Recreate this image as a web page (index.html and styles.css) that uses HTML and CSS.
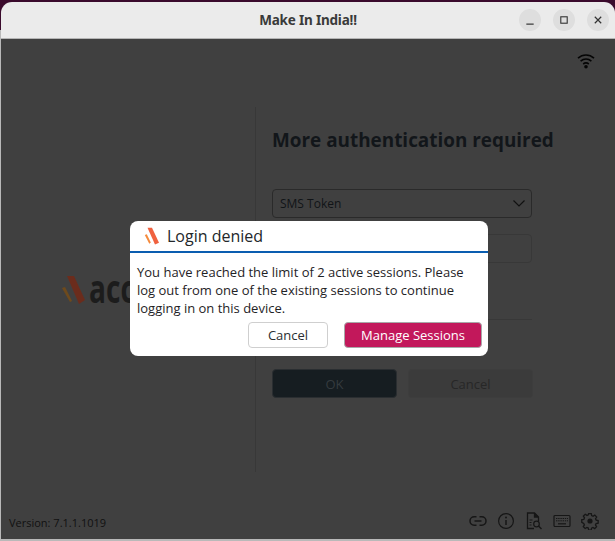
FILE: index.html
```html
<!DOCTYPE html>
<html lang="en">
<head>
<meta charset="utf-8">
<title>Make In India!!</title>
<link rel="stylesheet" href="styles.css">
</head>
<body>
<div class="window">
  <header class="titlebar">
    <div class="title">Make In India!!</div>
    <div class="controls">
      <span class="ctl"><svg width="24" height="24" viewBox="0 0 24 24"><path d="M8 16.500h8" stroke="#333" stroke-width="1.300" fill="none"/></svg></span>
      <span class="ctl"><svg width="24" height="24" viewBox="0 0 24 24"><rect x="8.500" y="8.500" width="7" height="7" stroke="#333" stroke-width="1.200" fill="none"/></svg></span>
      <span class="ctl"><svg width="24" height="24" viewBox="0 0 24 24"><path d="M8.500 8.500l7 7M15.500 8.500l-7 7" stroke="#333" stroke-width="1.300" fill="none"/></svg></span>
    </div>
  </header>
  <div class="content">
    <div class="status">
      <svg width="18" height="16" viewBox="0 0 18 16"><path d="M1 5.200C5.600 1 12.400 1 17 5.200M3.600 8.200c3.200-2.800 7.600-2.800 10.800 0M6.200 11c1.700-1.300 3.900-1.300 5.600 0" stroke="#050505" stroke-width="1.600" fill="none"/><circle cx="9" cy="13.700" r="1.800" fill="#050505"/></svg>
    </div>
    <div class="main">
      <aside class="brand">
        <svg class="brand-mark" width="26" height="30" viewBox="0 0 26 30"><path d="M6 1h7l11 24-6 4z" fill="#6b2c1c"/><path d="M1 13l3-1 7 14-2 1z" fill="#6e4a1c"/></svg>
        <span class="brand-name">accops</span>
      </aside>
      <section class="form">
        <h1 class="heading">More authentication required</h1>
        <div class="field select"><span>SMS Token</span>
          <svg width="14" height="9" viewBox="0 0 14 9"><path d="M1.500 1.500L7 7l5.500-5.500" stroke="#111" stroke-width="1.200" fill="none"/></svg>
        </div>
        <div class="field input"></div>
        <div class="rule"></div>
        <div class="actions">
          <div class="btn btn-ok">OK</div>
          <div class="btn btn-cancel">Cancel</div>
        </div>
      </section>
    </div>
    <footer class="footer">
      <span class="version">Version: 7.1.1.1019</span>
      <div class="tools">
        <svg width="18" height="18" viewBox="0 0 18 18"><path d="M7.500 4.800H5.200a4.200 4.200 0 0 0 0 8.400h2.300M10.500 4.800h2.300a4.200 4.200 0 0 1 0 8.400h-2.300M5.500 9h7" stroke="#161616" stroke-width="1.500" fill="none"/></svg>
        <svg width="18" height="18" viewBox="0 0 18 18"><circle cx="9" cy="9" r="7.400" stroke="#161616" stroke-width="1.200" fill="none"/><path d="M9 8v5" stroke="#161616" stroke-width="1.500"/><circle cx="9" cy="5.500" r="1" fill="#161616"/></svg>
        <svg width="18" height="18" viewBox="0 0 18 18"><path d="M9 16.500H2.500V1h7l4 4v4M9.500 1v4h4" stroke="#161616" stroke-width="1.300" fill="none"/><path d="M9.500 1l4 4h-4z" fill="#161616"/><path d="M4.500 8h3M4.500 10.500h2M4.500 13h2" stroke="#161616"/><circle cx="11.500" cy="12" r="2.800" stroke="#161616" stroke-width="1.200" fill="none"/><path d="M13.500 14l3 3" stroke="#161616" stroke-width="1.400"/></svg>
        <svg width="18" height="14" viewBox="0 0 18 14"><rect x="1" y="1.500" width="16" height="11" rx="1" stroke="#161616" stroke-width="1.200" fill="none"/><path d="M3 4.500h12M3 6.800h12" stroke="#161616" stroke-dasharray="1.400 .8"/><path d="M5 9.800h8" stroke="#161616" stroke-width="1.200"/></svg>
        <svg width="18" height="18" viewBox="0 0 18 18"><path d="M7.600 1h2.800l.4 2.200 1.500.7 1.900-1.200 2 2-1.200 1.900.7 1.500 2.100.5v2.800l-2.200.4-.7 1.500 1.200 1.900-2 2-1.900-1.200-1.500.7-.4 2.100H7.600l-.4-2.200-1.500-.7-1.900 1.200-2-2 1.200-1.900-.7-1.500L.2 10.400V7.600l2.200-.4.700-1.500-1.200-1.900 2-2 1.900 1.200 1.500-.7z" stroke="#161616" stroke-width="1.400" fill="none" transform="translate(.6 .6) scale(.93)"/><circle cx="9" cy="9" r="2.600" fill="#161616"/></svg>
      </div>
    </footer>
    <div class="modal">
      <div class="modal-head">
        <svg width="16" height="18" viewBox="0 0 16 18"><path d="M3.500.8h4.500l7 15-4 1.700z" fill="#f0613f"/><path d="M.8 8l2-.8 4 8.300-1.500 1.200z" fill="#f58a3c"/></svg>
        <span class="modal-title">Login denied</span>
      </div>
      <p class="modal-text">You have reached the limit of 2 active sessions. Please log out from one of the existing sessions to continue logging in on this device.</p>
      <div class="modal-actions">
        <button class="mbtn mbtn-plain">Cancel</button>
        <button class="mbtn mbtn-primary">Manage Sessions</button>
      </div>
    </div>
  </div>
</div>
</body>
</html>
```
FILE: styles.css
```css
* { box-sizing: border-box; }
html, body { height: 100%; }
body {
  margin: 0;
  background: #c9c9c9;
  font-family: "Open Sans", "Noto Sans", sans-serif;
  overflow: hidden;
}
.window {
  width: 615px;
  height: 541px;
  padding: 2px 0 2px 1px;
  display: flex;
  flex-direction: column;
  background: linear-gradient(#3a0a2c 0 30px, #b9b9b9 30px);
  opacity: 0.999;
}
.titlebar {
  height: 37px;
  flex: none;
  position: relative;
  display: flex;
  align-items: center;
  justify-content: flex-end;
  padding-right: 6px;
  background: #ebebeb;
  border-radius: 11px 11px 0 0;
  border-bottom: 1px solid #b5b5b5;
}
.title {
  position: absolute;
  left: 0;
  right: 0;
  top: 8px;
  text-align: center;
  font: 700 13.500px/20px "Noto Sans", sans-serif;
  letter-spacing: -0.2px;
  color: #3a3a3a;
}
.controls { display: flex; gap: 12px; margin-top: -1px; }
.ctl {
  width: 22px;
  height: 22px;
  border-radius: 50%;
  background: #dedede;
  display: flex;
  align-items: center;
  justify-content: center;
}
.content {
  flex: 1;
  position: relative;
  display: flex;
  flex-direction: column;
  background: #404040;
  min-height: 0;
}
.status {
  height: 68px;
  flex: none;
  display: flex;
  justify-content: flex-end;
  padding: 14px 20px 0 0;
}
.main { height: 365px; flex: none; display: flex; }
.brand {
  width: 255px;
  flex: none;
  border-right: 1px solid #383838;
  display: flex;
  align-items: center;
  gap: 2px;
  padding: 0 0 0 60px;
  overflow: hidden;
}
.brand-mark { flex: none; }
.brand-name {
  font: 700 39px/44px "Open Sans", sans-serif;
  color: #1c1c1c;
  margin-top: -4px;
  transform: scaleX(0.72);
  transform-origin: left center;
}
.form {
  flex: 1;
  padding: 20px 0 0 16px;
  display: flex;
  flex-direction: column;
}
.heading {
  margin: 0;
  font-size: 18.900px;
  line-height: 26px;
  font-weight: 700;
  color: #12161a;
}
.field {
  width: 260px;
  height: 29px;
  border-radius: 4px;
  border: 1px solid #2a2a2a;
}
.select {
  margin-top: 36px;
  display: flex;
  align-items: center;
  justify-content: space-between;
  padding: 0 5px 0 7px;
  font-size: 12px;
  color: #111417;
}
.input { margin-top: 16px; border-color: #383838; }
.rule { width: 260px; height: 1px; margin-top: 56px; background: #383838; }
.actions { display: flex; gap: 11px; margin-top: 49px; }
.btn {
  width: 125px;
  height: 29px;
  border-radius: 4px;
  display: flex;
  align-items: center;
  justify-content: center;
  font-size: 13px;
}
.btn-ok { background: #161d21; border: 1px solid #2a2e31; color: #353b3f; }
.btn-cancel { background: #3b3b3b; border: 1px solid #3d3d3d; color: #272727; }
.footer {
  flex: 1;
  display: flex;
  align-items: center;
  justify-content: space-between;
  padding: 33px 16px 0 8px;
}
.version { font-size: 11px; color: #111; }
.tools { display: flex; align-items: center; gap: 10px; margin-top: -3px; }
.modal {
  position: absolute;
  left: 129px;
  top: 182px;
  width: 358px;
  height: 135px;
  background: #fff;
  border-radius: 8px;
  display: flex;
  flex-direction: column;
  color: #1f2326;
}
.modal-head {
  height: 32px;
  flex: none;
  border-bottom: 2px solid #0a5db0;
  display: flex;
  align-items: center;
  gap: 7px;
  padding: 0 0 0 14px;
}
.modal-title { font-size: 16px; line-height: 22px; color: #23272a; }
.modal-text {
  margin: 10px 0 0;
  padding: 0 7px;
  font-size: 13px;
  line-height: 18px;
}
.modal-actions {
  display: flex;
  justify-content: flex-end;
  gap: 16px;
  padding-right: 6px;
  margin-top: 5px;
}
.mbtn {
  height: 26px;
  padding: 0;
  border-radius: 4px;
  font: 13px/1 "Open Sans", sans-serif;
}
.mbtn-plain { width: 80px; background: #fff; border: 1px solid #cfcfcf; color: #2a2e31; }
.mbtn-primary { width: 138px; background: #c2185b; border: 1px solid #a8a8a8; color: #fff; }
```
